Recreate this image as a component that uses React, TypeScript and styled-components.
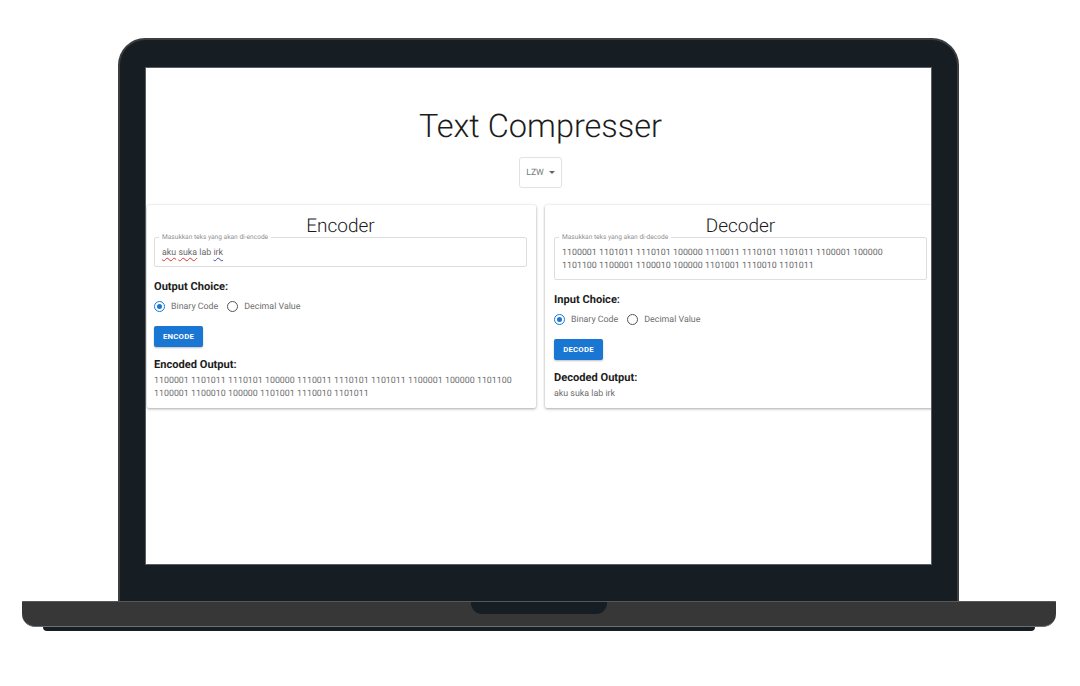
import React from "react";
import styled, { createGlobalStyle } from "styled-components";

const Global = createGlobalStyle`
  html, body { margin: 0; padding: 0; background: #fff; }
  body {
    font-family: Roboto, "Liberation Sans", sans-serif;
    text-rendering: geometricPrecision;
  }
  * { box-sizing: border-box; }
`;

const Page = styled.div`
  width: 1080px;
  height: 686px;
  padding: 38px 0 0 22px;
  overflow: hidden;
`;
const Laptop = styled.div`
  width: 1034px;
  display: flex;
  flex-direction: column;
  align-items: flex-start;
`;
const Lid = styled.div`
  margin-left: 96px;
  width: 841px;
  height: 563px;
  padding: 28px 26px 37px;
  background: #161d23;
  border: 2px solid #3c3d3e;
  border-bottom: 0;
  border-radius: 27px 27px 0 0;
`;
const Screen = styled.div`
  width: 785px;
  height: 496px;
  background: #fff;
  overflow: hidden;
  box-shadow: 0 0 0 1px #5a5e62;
  display: flex;
  flex-direction: column;
  padding-top: 39px;
`;
const Header = styled.header`
  display: flex;
  flex-direction: column;
  align-items: center;
  padding-left: 4px;
`;
const Title = styled.h1`
  margin: 0;
  font-size: 32.5px;
  font-weight: 300;
  line-height: 38px;
  color: #1c1c1c;
`;
const Select = styled.div`
  margin-top: 12px;
  width: 43px;
  height: 31px;
  border: 1px solid #e2e2e2;
  border-radius: 3px;
  display: flex;
  align-items: center;
  justify-content: center;
  gap: 5px;
  font-size: 8.7px;
  color: #777;
`;
const Caret = styled.span`
  width: 0;
  height: 0;
  border-left: 3px solid transparent;
  border-right: 3px solid transparent;
  border-top: 3px solid #666;
`;
const Cards = styled.div`
  margin-top: 17px;
  padding-left: 1px;
  display: grid;
  grid-template-columns: 389px 389px;
  gap: 9px;
`;
const Card = styled.section<{ $inset: number }>`
  height: 203px;
  padding: 0 0 0 ${(p) => p.$inset}px;
  background: #fff;
  border-radius: 2px;
  box-shadow: 0 1px 3px rgba(0, 0, 0, 0.32), 0 0 2px rgba(0, 0, 0, 0.08);
`;
const CardTitle = styled.h2`
  margin: 0;
  padding-top: 9px;
  width: 373px;
  height: 29px;
  text-align: center;
  font-size: 19px;
  font-weight: 300;
  line-height: 24px;
  color: #1c1c1c;
`;
const Field = styled.fieldset<{ $tall?: boolean }>`
  margin: 0;
  width: 373px;
  height: ${(p) => (p.$tall ? 46 : 33)}px;
  padding: 0 7px;
  border: 1px solid #dedede;
  border-radius: 2px;
  font-size: 8.85px;
  line-height: 13.3px;
  color: #6a6a6a;
`;
const Legend = styled.legend`
  padding: 0 3px;
  margin-left: -3px;
  font-size: 6.6px;
  line-height: 7px;
  color: #8f8f8f;
`;
const FieldText = styled.div`
  padding-top: 6px;
  width: 340px;
`;
const Spell = styled.span<{ $tone: string }>`
  text-decoration: underline wavy ${(p) => p.$tone};
  text-decoration-thickness: 0.5px;
  text-underline-offset: 1.5px;
`;
const Heading = styled.div<{ $top: number }>`
  margin-top: ${(p) => p.$top}px;
  font-size: 11.1px;
  font-weight: 700;
  line-height: 13px;
  color: #1c1c1c;
`;
const Radios = styled.div`
  margin-top: 7px;
  height: 13px;
  display: flex;
  align-items: center;
  font-size: 8.85px;
  color: #6f6f6f;
`;
const Radio = styled.span<{ $on?: boolean }>`
  width: 11px;
  height: 11px;
  margin-right: 6px;
  border-radius: 50%;
  border: 1.3px solid ${(p) => (p.$on ? "#1976d2" : "#555")};
  display: flex;
  align-items: center;
  justify-content: center;
  &::after {
    content: "";
    width: 5.4px;
    height: 5.4px;
    border-radius: 50%;
    background: ${(p) => (p.$on ? "#1976d2" : "transparent")};
  }
`;
const RadioLabel = styled.span`
  margin-right: 9px;
`;
const Button = styled.button`
  display: block;
  margin: 13px 0 0;
  width: 49px;
  height: 21px;
  padding: 0;
  border: 0;
  border-radius: 2px;
  background: #1976d2;
  box-shadow: 0 1px 2px rgba(0, 0, 0, 0.25);
  color: #fff;
  font-family: Roboto, sans-serif;
  font-size: 7.8px;
  font-weight: 700;
  letter-spacing: 0.2px;
`;
const Output = styled.div`
  margin-top: 4px;
  font-size: 8.85px;
  line-height: 13.3px;
  color: #6f6f6f;
`;
const Base = styled.div`
  width: 1034px;
  height: 26px;
  display: flex;
  justify-content: center;
  align-items: flex-start;
  background: #373737;
  border-top: 1px solid #55585b;
  border-bottom: 1px solid #6c7074;
  border-radius: 1px 1px 13px 13px;
`;
const Notch = styled.div`
  width: 136px;
  height: 12px;
  background: #161d23;
  border-radius: 0 0 11px 11px;
`;
const Foot = styled.div`
  margin-left: 21px;
  width: 992px;
  height: 4px;
  background: #161d23;
  border-radius: 0 0 5px 5px;
`;

const RadioGroup = () => (
  <Radios>
    <Radio $on />
    <RadioLabel>Binary Code</RadioLabel>
    <Radio />
    <RadioLabel>Decimal Value</RadioLabel>
  </Radios>
);

const App = () => (
  <Page>
    <Global />
    <Laptop>
      <Lid>
        <Screen>
          <Header>
            <Title>Text Compresser</Title>
            <Select>
              LZW <Caret />
            </Select>
          </Header>
          <Cards>
            <Card $inset={7}>
              <CardTitle>Encoder</CardTitle>
              <Field>
                <Legend>Masukkan teks yang akan di-encode</Legend>
                <FieldText>
                  <Spell $tone="#e0352b">aku</Spell> <Spell $tone="#e0352b">suka</Spell> lab{" "}
                  <Spell $tone="#3f51b5">irk</Spell>
                </FieldText>
              </Field>
              <Heading $top={13}>Output Choice:</Heading>
              <RadioGroup />
              <Button>ENCODE</Button>
              <Heading $top={11}>Encoded Output:</Heading>
              <Output>
                1100001 1101011 1110101 100000 1110011 1110101 1101011 1100001 100000 1101100
                <br />
                1100001 1100010 100000 1101001 1110010 1101011
              </Output>
            </Card>
            <Card $inset={9}>
              <CardTitle>Decoder</CardTitle>
              <Field $tall>
                <Legend>Masukkan teks yang akan di-decode</Legend>
                <FieldText>
                  1100001 1101011 1110101 100000 1110011 1110101 1101011 1100001 100000
                  <br />
                  1101100 1100001 1100010 100000 1101001 1110010 1101011
                </FieldText>
              </Field>
              <Heading $top={13}>Input Choice:</Heading>
              <RadioGroup />
              <Button>DECODE</Button>
              <Heading $top={11}>Decoded Output:</Heading>
              <Output>aku suka lab irk</Output>
            </Card>
          </Cards>
        </Screen>
      </Lid>
      <Base>
        <Notch />
      </Base>
      <Foot />
    </Laptop>
  </Page>
);

export default App;
